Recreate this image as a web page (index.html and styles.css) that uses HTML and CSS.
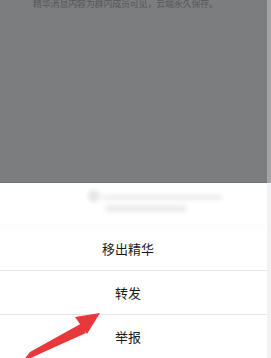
FILE: index.html
```html
<!DOCTYPE html>
<html lang="zh">
<head>
<meta charset="utf-8">
<link rel="stylesheet" href="styles.css">
</head>
<body>
<div class="page">
  <div class="main">
    <div class="mask">
      <p class="tip">精华消息内容为群内成员可见，云端永久保存。</p>
    </div>
    <div class="sheet">
      <div class="preview">
        <span class="blur-dot"></span>
        <div class="blur-lines">
          <span class="blur-line long"></span>
          <span class="blur-line short"></span>
        </div>
      </div>
      <div class="item">移出精华</div>
      <div class="item">转发</div>
      <div class="item">举报</div>
    </div>
  </div>
  <div class="edge">
    <div class="edge-top"></div>
    <div class="edge-bottom"></div>
  </div>
  <svg class="arrow" width="271" height="358" viewBox="0 0 271 358">
    <path d="M26 360 L80 325 L86 333 Z" fill="#e8383b"/>
    <path d="M100 313 L75 317 L87 334 Z" fill="#e8383b"/>
    <path d="M22 362 L30 352 L84 322 L88 330 Z" fill="#e8383b"/>
  </svg>
</div>
</body>
</html>
```

FILE: styles.css
```css
html, body {
  margin: 0;
  padding: 0;
}
body {
  width: 271px;
  height: 358px;
  overflow: hidden;
  font-family: "Noto Sans CJK SC", "Noto Sans", sans-serif;
  background: #fff;
}
.page {
  position: relative;
  display: flex;
  width: 271px;
  height: 358px;
}
.main {
  width: 267px;
  display: flex;
  flex-direction: column;
}
.mask {
  height: 183px;
  background: #7b7d7f;
  border-bottom: 1px solid #6f7173;
  box-sizing: border-box;
}
.tip {
  margin: 0;
  padding-left: 33px;
  font-size: 9px;
  line-height: 8px;
  color: #56585a;
  white-space: nowrap;
  letter-spacing: -0.2px;
}
.sheet {
  flex: 1;
  background: #fff;
  display: flex;
  flex-direction: column;
}
.preview {
  height: 44px;
  box-sizing: border-box;
  display: flex;
  align-items: flex-start;
  padding: 7px 0 0 88px;
  gap: 2px;
  filter: blur(2px);
  border-bottom: 1px solid #eeeeee;
}
.blur-dot {
  width: 12px;
  height: 12px;
  border-radius: 50%;
  background: #e6e6e6;
}
.blur-lines {
  display: flex;
  flex-direction: column;
  gap: 5px;
  padding-top: 5px;
}
.blur-line {
  display: block;
  height: 5px;
  background: #ececec;
}
.blur-line.long { width: 120px; }
.blur-line.short { width: 80px; height: 7px; margin-left: 4px; }
.item {
  height: 43px;
  display: flex;
  align-items: center;
  justify-content: center;
  padding-right: 11px;
  font-size: 13px;
  color: #1a1a1a;
  border-bottom: 1px solid #e6e6e6;
}
.item:last-child {
  border-bottom: none;
}
.edge {
  width: 4px;
  display: flex;
  flex-direction: column;
}
.edge-top {
  height: 183px;
  background: #a3a4a5;
}
.edge-bottom {
  flex: 1;
  background: #f2f2f2;
}
.arrow {
  position: absolute;
  left: 0;
  top: 0;
  pointer-events: none;
}
```
